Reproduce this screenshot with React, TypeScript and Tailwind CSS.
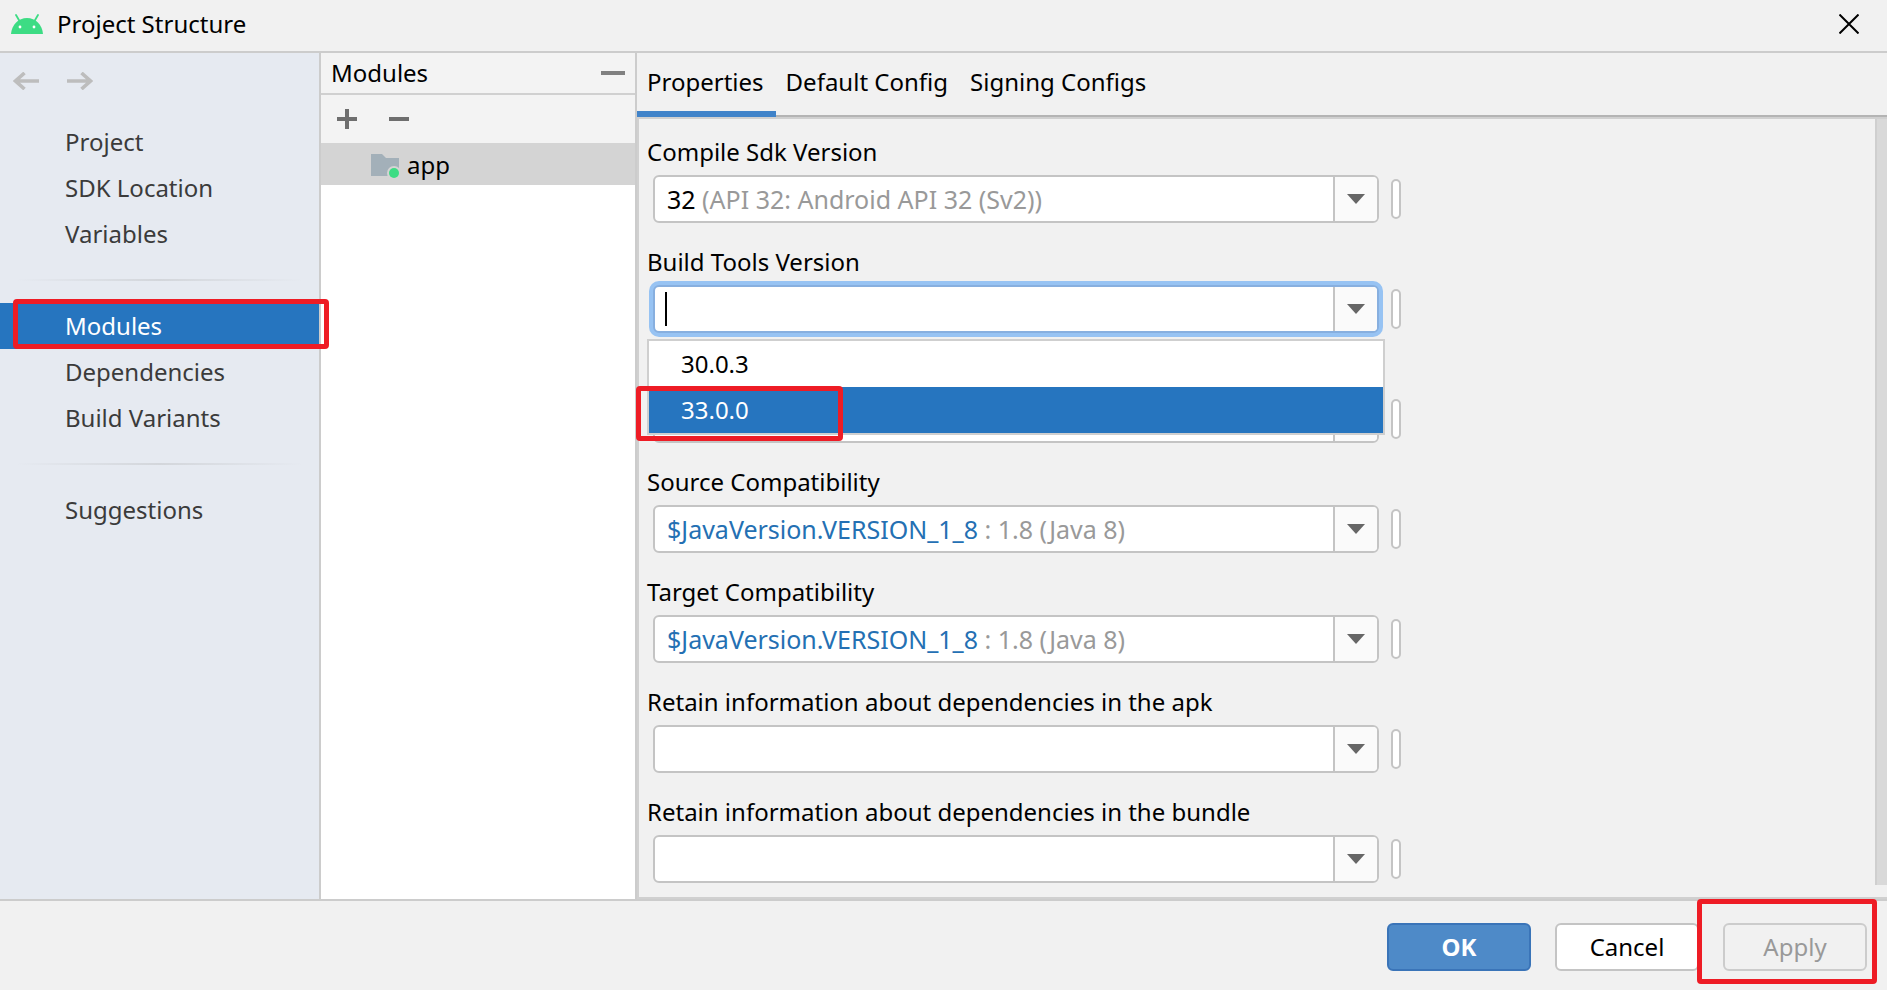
import { useState } from "react";

function AndroidLogo() {
  return (
    <svg width="32" height="20" viewBox="0 0 32 20" aria-hidden="true">
      <path d="M0 20C.8 10.500 7.500 4 16 4s15.200 6.500 16 16z" fill="#3ddc84" />
      <path d="M5 1l3.500 6M27 1l-3.500 6" stroke="#3ddc84" strokeWidth="1.8" strokeLinecap="round" />
      <circle cx="9" cy="13" r="1.4" fill="#fff" />
      <circle cx="23" cy="13" r="1.4" fill="#fff" />
    </svg>
  );
}

function ArrowIcon({ right = false }: { right?: boolean }) {
  return (
    <svg width="26" height="18" viewBox="0 0 26 18" fill="none" stroke="#bdbdbd" strokeWidth="3.6" aria-hidden="true">
      {right ? <path d="M0 9h24M14.500 1l9 8-9 8" /> : <path d="M26 9H2M11.500 1l-9 8 9 8" />}
    </svg>
  );
}

function FolderIcon() {
  return (
    <svg width="30" height="26" viewBox="0 0 30 26" aria-hidden="true">
      <path d="M1 2h11l4 4h13v18H1z" fill="#a3b0b9" />
      <circle cx="24" cy="21" r="7" fill="#d4d4d4" />
      <circle cx="24" cy="21" r="5" fill="#3ddc84" />
    </svg>
  );
}

function NavItem({ label, active = false }: { label: string; active?: boolean }) {
  return (
    <li className="relative">
      <a
        href="#"
        aria-current={active ? "page" : undefined}
        className={
          active
            ? "flex h-[46px] items-center bg-[#2675bf] pl-[65px] text-white"
            : "flex h-[46px] items-center pl-[65px] text-[#3b3b3b]"
        }
      >
        {label}
      </a>
      {active && (
        <span className="pointer-events-none absolute -top-1 -right-[10px] bottom-0 left-[13px] z-20 rounded-sm border-5 border-[#ee1c25]" />
      )}
    </li>
  );
}

function NavDivider() {
  return (
    <li role="separator" className="flex h-[46px] items-center px-4">
      <span className="h-[2px] w-full bg-linear-to-r from-transparent via-[#d3d6db] to-transparent" />
    </li>
  );
}

type FieldProps = {
  id: string;
  label: string;
  value?: string;
  hint?: string;
  linked?: boolean;
  labelled?: boolean;
  options?: string[];
};

function Field({ id, label, value = "", hint, linked = false, labelled = true, options }: FieldProps) {
  const [text, setText] = useState(value);
  return (
    <div className="flex flex-col gap-[7px]">
      <label htmlFor={id} className="h-8 leading-8">
        {labelled ? label : null}
      </label>
      <div className="relative flex items-center gap-3 pl-[6px]">
        <div
          className={
            options
              ? "flex h-12 w-[726px] overflow-hidden rounded-md border-2 border-[#87afdf] bg-white ring-4 ring-[#97c3f3]"
              : "flex h-12 w-[726px] overflow-hidden rounded-md border-2 border-[#c4c4c4] bg-white"
          }
        >
          <div className="flex flex-1 items-center pl-3 text-[25px]">
            {options && <span className="-ml-[2px] h-[34px] w-[2px] bg-black" />}
            <input
              id={id}
              aria-label={label}
              value={text}
              onChange={(e) => setText(e.target.value)}
              className={
                !value
                  ? "h-8 min-w-0 flex-1 bg-transparent leading-8 outline-none"
                  : linked
                    ? "h-8 field-sizing-content bg-transparent leading-8 text-[#2470b3] outline-none"
                    : "h-8 field-sizing-content bg-transparent leading-8 outline-none"
              }
            />
            {hint && <span className="leading-8 whitespace-pre text-[#999999]">{hint}</span>}
          </div>
          <button
            type="button"
            aria-label={`Show ${label} options`}
            className="flex w-[44px] items-center justify-center border-l-2 border-[#c4c4c4] bg-[#fafafa]"
          >
            <svg width="18" height="10" viewBox="0 0 18 10" aria-hidden="true">
              <path d="M0 0h18l-9 10z" fill="#666" />
            </svg>
          </button>
        </div>
        <button
          type="button"
          aria-label={`${label} variables`}
          className="h-10 w-[10px] rounded-full border-2 border-[#c4c4c4] bg-white"
        />
        {options && (
          <ul role="listbox" className="absolute top-[54px] left-0 z-10 w-[738px] border-2 border-[#cfcfcf] bg-white">
            {options.map((o, i) => (
              <li
                key={o}
                role="option"
                aria-selected={i === 1}
                className={
                  i === 1
                    ? "relative flex h-[46px] items-center bg-[#2675bf] pl-8 text-white"
                    : "flex h-[46px] items-center pl-8"
                }
              >
                {o}
                {i === 1 && (
                  <span className="pointer-events-none absolute -top-px -left-[13px] h-[55px] w-[207px] rounded-sm border-5 border-[#ee1c25]" />
                )}
              </li>
            ))}
          </ul>
        )}
      </div>
    </div>
  );
}

export default function App() {
  return (
    <div className="flex min-h-screen flex-col bg-[#f1f1f1] font-['Noto_Sans','Open_Sans',sans-serif] text-[24px] leading-8 text-black">
      <header className="flex h-[53px] items-center border-b-2 border-[#cccccc] pr-7 pb-1 pl-[11px]">
        <AndroidLogo />
        <h1 className="ml-[14px] flex-1">Project Structure</h1>
        <button type="button" aria-label="Close">
          <svg width="20" height="20" viewBox="0 0 20 20" stroke="#000" strokeWidth="2" aria-hidden="true">
            <path d="M.5.5l19 19M19.500.5l-19 19" />
          </svg>
        </button>
      </header>

      <div className="flex flex-1">
        <nav className="w-[321px] shrink-0 border-r-2 border-[#cccccc] bg-[#e6eaf1]">
          <div className="flex h-[66px] items-start gap-[28px] pt-[19px] pl-[13px]">
            <button type="button" aria-label="Back">
              <ArrowIcon />
            </button>
            <button type="button" aria-label="Forward">
              <ArrowIcon right />
            </button>
          </div>
          <ul>
            <NavItem label="Project" />
            <NavItem label="SDK Location" />
            <NavItem label="Variables" />
            <NavDivider />
            <NavItem label="Modules" active />
            <NavItem label="Dependencies" />
            <NavItem label="Build Variants" />
            <NavDivider />
            <NavItem label="Suggestions" />
          </ul>
        </nav>

        <section className="w-[316px] shrink-0 border-r-2 border-[#cccccc] bg-white">
          <div className="flex h-[42px] items-center justify-between border-b-2 border-[#d0d0d0] bg-[#f3f3f3] pr-[10px] pl-[10px]">
            <h2>Modules</h2>
            <button type="button" aria-label="Hide" className="flex h-6 w-6 items-center">
              <span className="h-1 w-6 bg-[#808080]" />
            </button>
          </div>
          <div className="flex h-12 items-center gap-8 bg-[#f3f3f3] pl-4">
            <button type="button" aria-label="Add module">
              <svg width="20" height="20" viewBox="0 0 20 20" fill="#6e6e6e" aria-hidden="true">
                <path d="M8 0h4v8h8v4h-8v8H8v-8H0V8h8z" />
              </svg>
            </button>
            <button type="button" aria-label="Remove module">
              <svg width="20" height="20" viewBox="0 0 20 20" fill="#6e6e6e" aria-hidden="true">
                <path d="M0 8h20v4H0z" />
              </svg>
            </button>
          </div>
          <div className="flex h-[42px] items-center gap-[7px] bg-[#d4d4d4] pt-[2px] pl-[49px]">
            <FolderIcon />
            <span>app</span>
          </div>
        </section>

        <main className="flex min-w-0 flex-1 flex-col">
          <div role="tablist" className="flex h-16 border-b-2 border-[#b4b4b4]">
            <button role="tab" aria-selected="true" className="-mb-[2px] flex items-start border-b-6 border-[#4083c9] pt-[13px] pr-3 pl-[10px]">
              Properties
            </button>
            <button role="tab" aria-selected="false" className="flex items-start pt-[13px] pr-3 pl-[10px]">
              Default Config
            </button>
            <button role="tab" aria-selected="false" className="flex items-start pt-[13px] pr-3 pl-[10px]">
              Signing Configs
            </button>
          </div>
          <div className="flex flex-1 border-y-2 border-l-2 border-[#d0d0d0]">
            <form className="flex flex-1 flex-col gap-[23px] pt-[17px] pl-2">
              <Field id="compile" label="Compile Sdk Version" value="32" hint=" (API 32: Android API 32 (Sv2))" />
              <Field id="build-tools" label="Build Tools Version" options={["30.0.3", "33.0.0"]} />
              <Field id="ndk" label="NDK Version" labelled={false} />
              <Field id="source" label="Source Compatibility" value="$JavaVersion.VERSION_1_8" hint=" : 1.8 (Java 8)" linked />
              <Field id="target" label="Target Compatibility" value="$JavaVersion.VERSION_1_8" hint=" : 1.8 (Java 8)" linked />
              <Field id="apk" label="Retain information about dependencies in the apk" />
              <Field id="bundle" label="Retain information about dependencies in the bundle" />
            </form>
            <div className="mb-3 w-3 border-l-2 border-[#cfcfcf] bg-[#d9d9d9]" />
          </div>
        </main>
      </div>

      <footer className="flex h-[91px] items-start justify-end gap-6 border-t-2 border-[#cccccc] pt-[22px] pr-5">
        <button type="button" className="h-12 w-36 rounded-md border-2 border-[#3a74b8] bg-[#4e8ac8] font-bold text-white">
          OK
        </button>
        <button type="button" className="h-12 w-36 rounded-md border-2 border-[#c4c4c4] bg-white">
          Cancel
        </button>
        <div className="relative">
          <button type="button" disabled className="h-12 w-36 rounded-md border-2 border-[#cccccc] text-[#999999]">
            Apply
          </button>
          <span className="pointer-events-none absolute -top-6 -right-[10px] -left-[26px] h-[85px] rounded-sm border-5 border-[#ee1c25]" />
        </div>
      </footer>
    </div>
  );
}
